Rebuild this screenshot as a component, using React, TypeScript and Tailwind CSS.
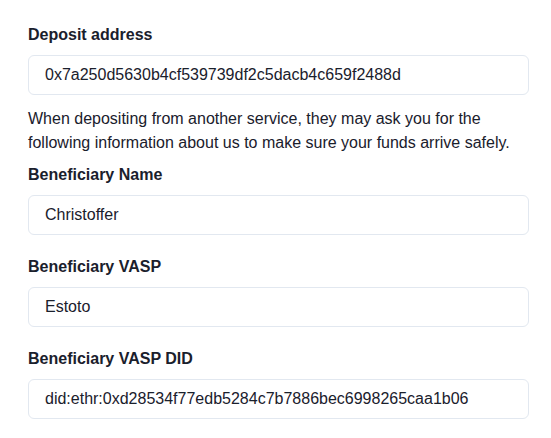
import React from "react";

function Field({ label, value }: { label: string; value: string }) {
  return (
    <div className="flex flex-col">
      <label className="text-[16px] leading-[24px] font-bold text-[#1a202c] mb-2">{label}</label>
      <div className="h-10 flex items-center px-4 border border-[#e2e8f0] rounded-md text-[16px] text-[#1a202c]">
        {value}
      </div>
    </div>
  );
}

export default function App() {
  return (
    <div
      className="w-[551px] h-[438px] bg-white pl-[28px] pr-[22px] pt-[23px]"
      style={{ fontFamily: '"Liberation Sans", Arial, sans-serif' }}
    >
      <Field label="Deposit address" value="0x7a250d5630b4cf539739df2c5dacb4c659f2488d" />
      <p className="mt-3 mb-2 text-[16px] leading-[24px] text-[#1a202c]">
        When depositing from another service, they may ask you for the following information about us to make sure your funds arrive safely.
      </p>
      <Field label="Beneficiary Name" value="Christoffer" />
      <div className="mt-5">
        <Field label="Beneficiary VASP" value="Estoto" />
      </div>
      <div className="mt-5">
        <Field label="Beneficiary VASP DID" value="did:ethr:0xd28534f77edb5284c7b7886bec6998265caa1b06" />
      </div>
    </div>
  );
}
